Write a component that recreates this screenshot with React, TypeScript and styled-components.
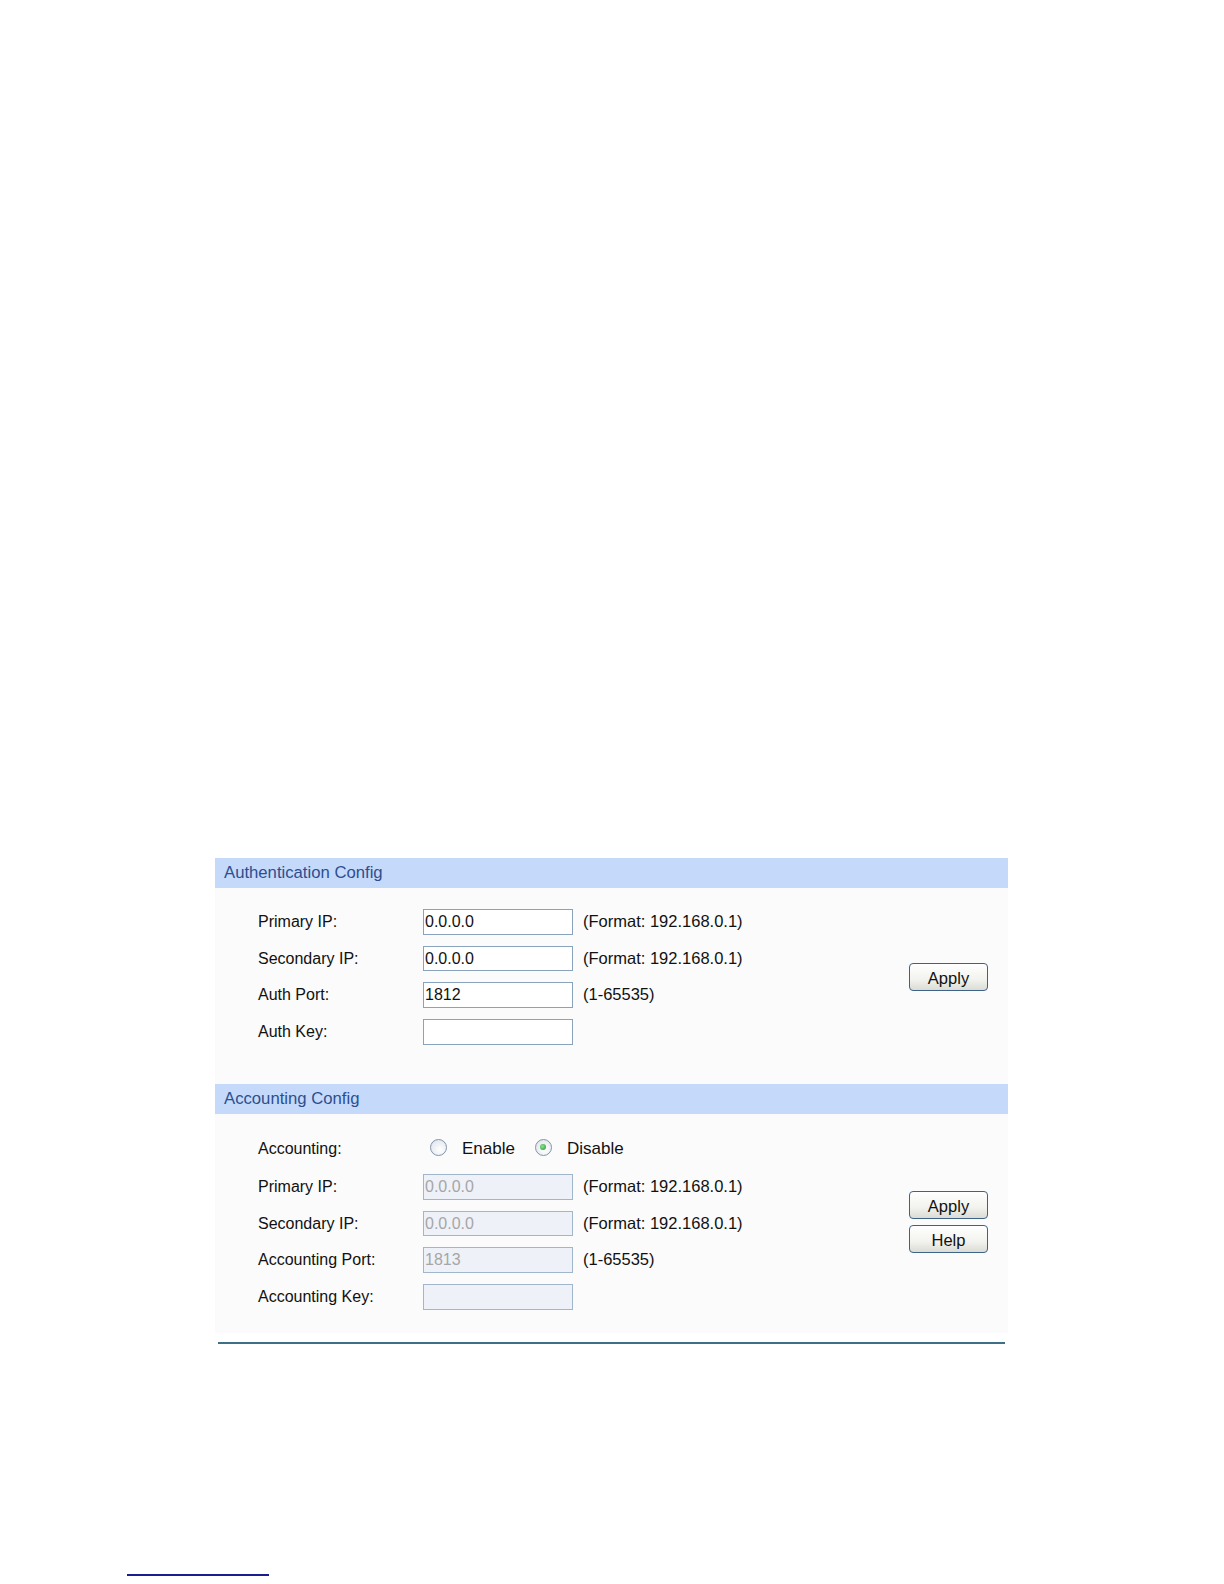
import * as React from "react";
import styled, { createGlobalStyle } from "styled-components";

const GlobalStyle = createGlobalStyle`
  html, body {
    margin: 0;
    padding: 0;
    background: #ffffff;
  }
  body {
    font-family: "Liberation Sans", Arial, sans-serif;
    color: #111111;
  }
`;

const Page = styled.div`
  padding-top: 858px;
`;

const Panel = styled.div`
  margin-left: 215px;
  width: 793px;
  background: #fbfbfb;
`;

const SectionHeader = styled.div`
  height: 30px;
  display: flex;
  align-items: center;
  padding-left: 9px;
  background: #c5d9fb;
  color: #2d4f8f;
  font-size: 16.7px;
`;

const SectionBody = styled.div<{ $top: number; $bottom: number }>`
  display: flex;
  align-items: center;
  padding: ${(p) => p.$top}px 20px ${(p) => p.$bottom}px 43px;
`;

const Fields = styled.div`
  flex: 1;
  display: grid;
  grid-template-columns: 165px 160px auto;
  row-gap: 11.2px;
  align-items: center;
`;

const Label = styled.div`
  font-size: 16px;
  line-height: 25.5px;
  height: 25.5px;
`;

const TextBox = styled.div<{ $disabled?: boolean }>`
  box-sizing: border-box;
  width: 150px;
  height: 25.5px;
  border: 1px solid ${(p) => (p.$disabled ? "#a2b6cb" : "#8aa3bd")};
  background: ${(p) => (p.$disabled ? "#eef2f8" : "#ffffff")};
  color: ${(p) => (p.$disabled ? "#a6a6a6" : "#111111")};
  font-size: 16px;
  line-height: 24px;
  padding-left: 1px;
  white-space: nowrap;
  overflow: hidden;
`;

const Hint = styled.div`
  font-size: 16.5px;
  line-height: 25.5px;
`;

const RadioRow = styled.div`
  grid-column: 2 / span 2;
  display: flex;
  align-items: center;
  height: 29px;
  margin-top: -1px;
  font-size: 17px;
`;

const RadioLabel = styled.span`
  margin-left: 15px;
  margin-right: 13px;
  position: relative;
  top: 1px;
`;

const Radio = styled.span<{ $checked?: boolean }>`
  box-sizing: border-box;
  flex: none;
  width: 17px;
  height: 17px;
  margin-left: 7px;
  border-radius: 50%;
  border: 1.5px solid #8293a8;
  background: radial-gradient(circle at 60% 65%, #ffffff 0%, #e6e9ef 70%, #cfd6df 100%);
  display: inline-flex;
  align-items: center;
  justify-content: center;
  position: relative;
  top: -1px;

  &::after {
    content: "";
    display: ${(p) => (p.$checked ? "block" : "none")};
    width: 6px;
    height: 6px;
    border-radius: 50%;
    background: radial-gradient(circle at 40% 40%, #8fe28f 0%, #2fa83a 80%);
  }
`;

const Actions = styled.div<{ $gap?: number }>`
  display: flex;
  flex-direction: column;
  gap: ${(p) => p.$gap ?? 6}px;
`;

const Button = styled.button`
  box-sizing: border-box;
  width: 79px;
  height: 28px;
  border: 1px solid #3f6386;
  border-radius: 4px;
  background: linear-gradient(#ffffff, #f2f2ee 60%, #dcdcd6);
  font-family: "Liberation Sans", Arial, sans-serif;
  font-size: 16.5px;
  color: #111111;
  padding: 3px 0 0;
`;

const BottomRule = styled.div`
  margin: 9.7px 0 0 218px;
  width: 787px;
  height: 2px;
  background: #3d6f86;
`;

const FootnoteRule = styled.div`
  margin: 229.6px 0 0 127px;
  width: 142px;
  height: 2px;
  background: #1c1c8c;
`;

type FieldProps = {
  label: string;
  value?: string;
  hint?: string;
  disabled?: boolean;
};

const Field = ({ label, value = "", hint = "", disabled }: FieldProps) => (
  <>
    <Label>{label}</Label>
    <TextBox $disabled={disabled}>{value}</TextBox>
    <Hint>{hint}</Hint>
  </>
);

const IP_HINT = "(Format: 192.168.0.1)";
const PORT_HINT = "(1-65535)";

const App = () => {
  return (
    <Page>
      <GlobalStyle />
      <Panel>
        <SectionHeader>Authentication Config</SectionHeader>
        <SectionBody $top={21} $bottom={39.3}>
          <Fields>
            <Field label="Primary IP:" value="0.0.0.0" hint={IP_HINT} />
            <Field label="Secondary IP:" value="0.0.0.0" hint={IP_HINT} />
            <Field label="Auth Port:" value="1812" hint={PORT_HINT} />
            <Field label="Auth Key:" />
          </Fields>
          <Actions>
            <Button>Apply</Button>
          </Actions>
        </SectionBody>

        <SectionHeader>Accounting Config</SectionHeader>
        <SectionBody $top={21} $bottom={23}>
          <Fields>
            <Label>Accounting:</Label>
            <RadioRow>
              <Radio />
              <RadioLabel>Enable</RadioLabel>
              <Radio $checked />
              <RadioLabel>Disable</RadioLabel>
            </RadioRow>
            <Field label="Primary IP:" value="0.0.0.0" hint={IP_HINT} disabled />
            <Field label="Secondary IP:" value="0.0.0.0" hint={IP_HINT} disabled />
            <Field label="Accounting Port:" value="1813" hint={PORT_HINT} disabled />
            <Field label="Accounting Key:" disabled />
          </Fields>
          <Actions $gap={6}>
            <Button>Apply</Button>
            <Button>Help</Button>
          </Actions>
        </SectionBody>
      </Panel>
      <BottomRule />
      <FootnoteRule />
    </Page>
  );
};

export default App;
